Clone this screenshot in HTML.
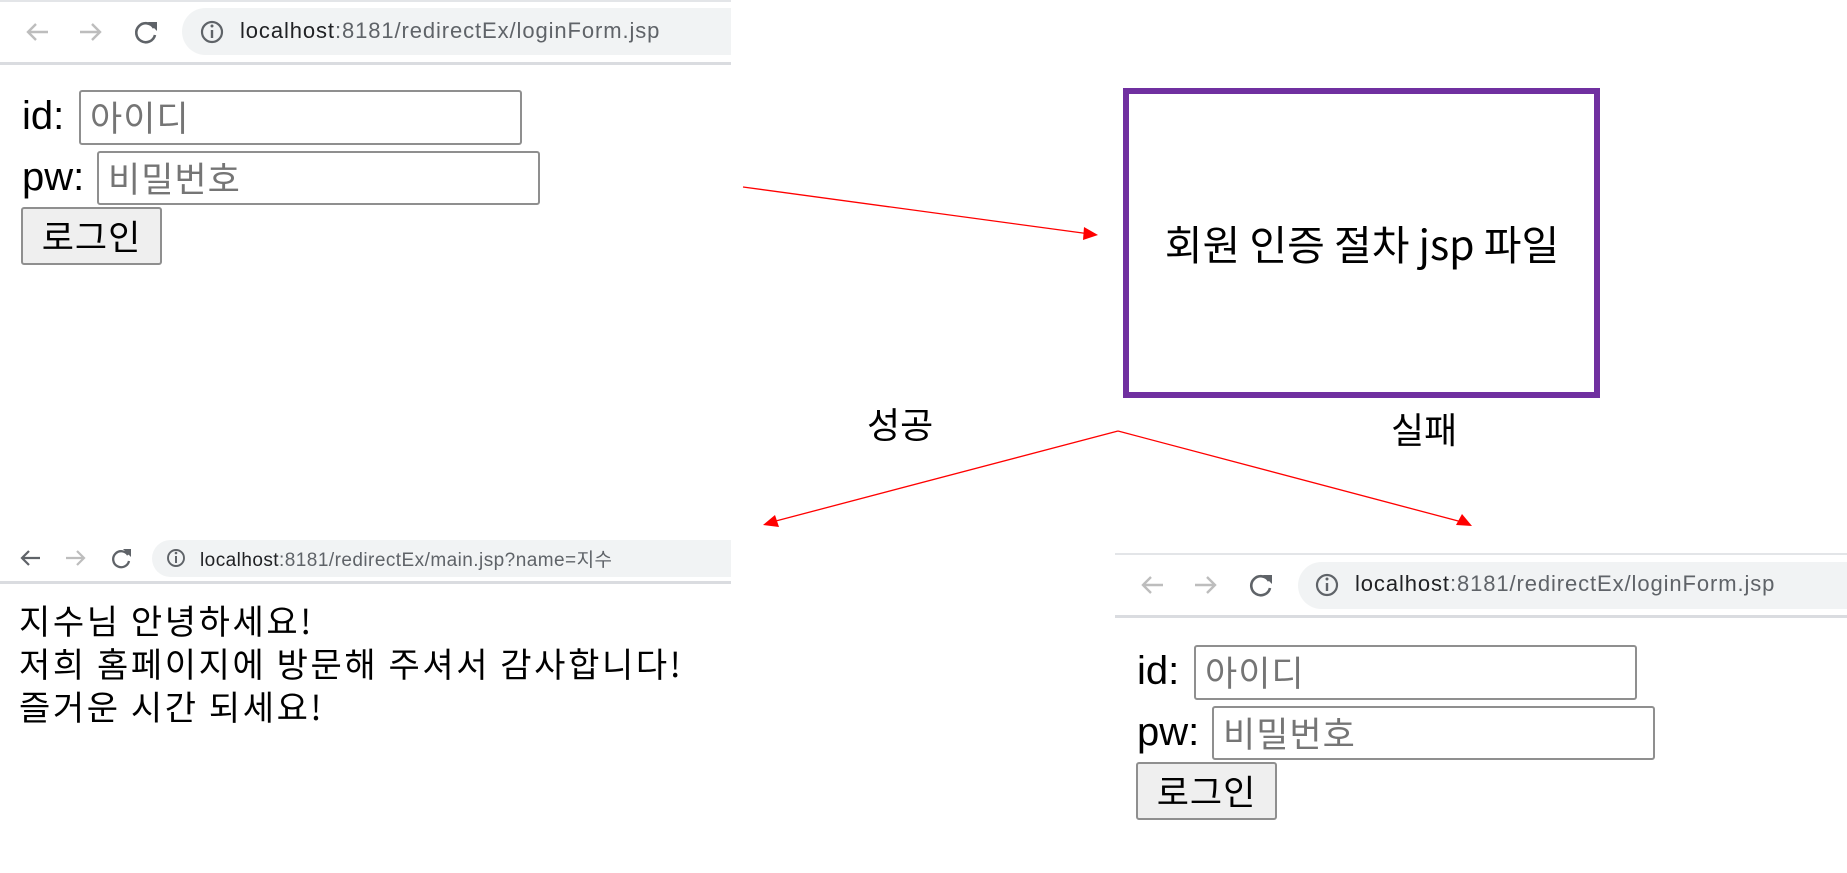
<!DOCTYPE html>
<html><head><meta charset="utf-8">
<style>
html,body{margin:0;padding:0;background:#fff;}
body{width:1847px;height:873px;position:relative;overflow:hidden;font-family:"Liberation Sans","Noto Sans CJK KR",sans-serif;color:#000;}
.a{position:absolute;}
.line{position:absolute;height:3px;background:#dadce0;}
.pill{position:absolute;background:#f1f3f4;border-radius:24px 0 0 24px;}
.url{position:absolute;font-family:"Liberation Sans","Noto Sans CJK KR",sans-serif;color:#5f6368;white-space:nowrap;}
.url b{font-weight:normal;color:#202124;}
.lbl{position:absolute;font-size:40px;line-height:1;white-space:nowrap;}
.inp{position:absolute;box-sizing:border-box;border:2px solid #8f8f8f;border-radius:3px;background:#fff;font-family:"Noto Sans CJK KR",sans-serif;color:#757575;font-size:35px;line-height:50px;padding-left:9px;letter-spacing:1px;}
.btn{position:absolute;box-sizing:border-box;border:2px solid #8f8f8f;border-radius:3px;background:#efefef;font-family:"Noto Sans CJK KR",sans-serif;font-size:35px;text-align:center;line-height:54px;letter-spacing:1px;}
.kr{font-family:"Noto Sans CJK KR",sans-serif;white-space:nowrap;}
</style></head><body>

<div class="line" style="left:0;top:0;width:731px;height:2px;background:#e3e5e8"></div>
<div class="line" style="left:0;top:62px;width:731px;"></div>
<div class="pill" style="left:182px;top:8px;width:549px;height:47px;"></div>
<svg class="a" style="left:0;top:0" width="300" height="62">
 <g fill="none" stroke="#bdbdbd" stroke-width="2.4">
  <path d="M48 32H28M36 24l-8 8 8 8"/>
  <path d="M80 32h20M92 24l8 8-8 8"/>
 </g>
 <path d="M154 28a9.5 9.5 0 1 0 1 7" fill="none" stroke="#5f6368" stroke-width="2.6"/>
 <path d="M148 22h9v9z" fill="#5f6368"/>
 <circle cx="212" cy="32" r="10" fill="none" stroke="#5f6368" stroke-width="2.2"/>
 <path d="M212 30v8" stroke="#5f6368" stroke-width="2.4"/><circle cx="212" cy="26" r="1.5" fill="#5f6368"/>
</svg>
<div class="url" style="left:240px;top:18px;font-size:22px;letter-spacing:0.9px;"><b>localhost</b>:8181/redirectEx/loginForm.jsp</div>

<div class="lbl" style="left:22px;top:96px;">id:</div>
<div class="inp" style="left:79px;top:90px;width:443px;height:55px;">아이디</div>
<div class="lbl" style="left:22px;top:157px;">pw:</div>
<div class="inp" style="left:97px;top:151px;width:443px;height:54px;">비밀번호</div>
<div class="btn" style="left:21px;top:207px;width:141px;height:58px;">로그인</div>

<div class="a" style="left:1123px;top:88px;width:477px;height:310px;box-sizing:border-box;border:6px solid #7030a0;"></div>
<div class="a kr" style="left:1124px;top:212px;width:476px;text-align:center;font-size:41px;line-height:60px;">회원 인증 절차 jsp 파일</div>

<div class="a kr" style="left:867px;top:398px;font-size:36px;line-height:50px;">성공</div>
<div class="a kr" style="left:1391px;top:403px;font-size:36px;line-height:50px;">실패</div>

<svg class="a" style="left:0;top:0" width="1847" height="873">
 <g stroke="#ff0000" stroke-width="1.3" fill="none">
  <path d="M743 187L1090 234"/>
  <path d="M1118 431L772 522"/>
  <path d="M1118 431L1462 522"/>
 </g>
 <g fill="#ff0000">
  <path d="M1098 235L1084 227L1083 240Z"/>
  <path d="M763 525L775 515L779 527Z"/>
  <path d="M1472 526L1456 525L1462 514Z"/>
 </g>
</svg>

<div class="line" style="left:0;top:581px;width:731px;"></div>
<div class="pill" style="left:152px;top:540px;width:579px;height:37px;border-radius:19px 0 0 19px;"></div>
<svg class="a" style="left:0;top:535px" width="260" height="46">
 <g fill="none" stroke="#5f6368" stroke-width="2.2"><path d="M40 23H22M29 16l-7 7 7 7"/></g>
 <g fill="none" stroke="#bdbdbd" stroke-width="2.2"><path d="M66 23h17M77 16l7 7-7 7"/></g>
 <path d="M128 20a8 8 0 1 0 1 6" fill="none" stroke="#5f6368" stroke-width="2.3"/>
 <path d="M123 14h8v8z" fill="#5f6368"/>
 <circle cx="176" cy="23" r="8" fill="none" stroke="#5f6368" stroke-width="1.9"/>
 <path d="M176 21v7" stroke="#5f6368" stroke-width="2"/><circle cx="176" cy="18" r="1.3" fill="#5f6368"/>
</svg>
<div class="url" style="left:200px;top:545px;font-size:19px;letter-spacing:0.45px;"><b>localhost</b>:8181/redirectEx/main.jsp?name=지수</div>

<div class="a kr" style="left:19px;top:598px;font-size:34px;line-height:43px;letter-spacing:2.6px;">지수님 안녕하세요!<br>저희 홈페이지에 방문해 주셔서 감사합니다!<br>즐거운 시간 되세요!</div>

<div class="line" style="left:1115px;top:553px;width:732px;height:2px;background:#e3e5e8"></div>
<div class="line" style="left:1115px;top:615px;width:732px;"></div>
<div class="pill" style="left:1298px;top:562px;width:549px;height:47px;"></div>
<svg class="a" style="left:1115px;top:553px" width="300" height="62">
 <g fill="none" stroke="#bdbdbd" stroke-width="2.4">
  <path d="M48 32H28M36 24l-8 8 8 8"/>
  <path d="M80 32h20M92 24l8 8-8 8"/>
 </g>
 <path d="M154 28a9.5 9.5 0 1 0 1 7" fill="none" stroke="#5f6368" stroke-width="2.6"/>
 <path d="M148 22h9v9z" fill="#5f6368"/>
 <circle cx="212" cy="32" r="10" fill="none" stroke="#5f6368" stroke-width="2.2"/>
 <path d="M212 30v8" stroke="#5f6368" stroke-width="2.4"/><circle cx="212" cy="26" r="1.5" fill="#5f6368"/>
</svg>
<div class="url" style="left:1355px;top:571px;font-size:22px;letter-spacing:0.9px;"><b>localhost</b>:8181/redirectEx/loginForm.jsp</div>

<div class="lbl" style="left:1137px;top:651px;">id:</div>
<div class="inp" style="left:1194px;top:645px;width:443px;height:55px;">아이디</div>
<div class="lbl" style="left:1137px;top:712px;">pw:</div>
<div class="inp" style="left:1212px;top:706px;width:443px;height:54px;">비밀번호</div>
<div class="btn" style="left:1136px;top:762px;width:141px;height:58px;">로그인</div>

</body></html>
